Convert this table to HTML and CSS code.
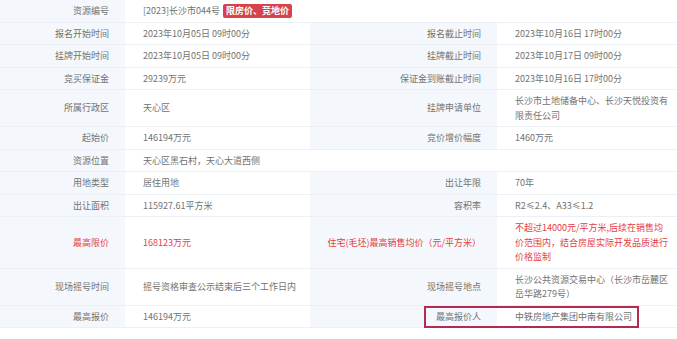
FILE: index.html
```html
<!DOCTYPE html>
<html lang="zh">
<head>
<meta charset="utf-8">
<title>资源信息</title>
<link rel="stylesheet" href="styles.css">
</head>
<body>
<div class="info">
  <div class="lbl">资源编号</div>
  <div class="val span3">[2023]长沙市044号<span class="tag">限房价、竞地价</span></div>

  <div class="lbl">报名开始时间</div>
  <div class="val">2023年10月05日 09时00分</div>
  <div class="lbl">报名截止时间</div>
  <div class="val">2023年10月16日 17时00分</div>

  <div class="lbl">挂牌开始时间</div>
  <div class="val">2023年10月05日 09时00分</div>
  <div class="lbl">挂牌截止时间</div>
  <div class="val">2023年10月17日 09时00分</div>

  <div class="lbl">竞买保证金</div>
  <div class="val">29239万元</div>
  <div class="lbl">保证金到账截止时间</div>
  <div class="val">2023年10月16日 17时00分</div>

  <div class="lbl">所属行政区</div>
  <div class="val">天心区</div>
  <div class="lbl">挂牌申请单位</div>
  <div class="val">长沙市土地储备中心、长沙天悦投资有<br>限责任公司</div>

  <div class="lbl">起始价</div>
  <div class="val">146194万元</div>
  <div class="lbl">竞价增价幅度</div>
  <div class="val">1460万元</div>

  <div class="lbl">资源位置</div>
  <div class="val span3">天心区黑石村，天心大道西侧</div>

  <div class="lbl">用地类型</div>
  <div class="val">居住用地</div>
  <div class="lbl">出让年限</div>
  <div class="val">70年</div>

  <div class="lbl">出让面积</div>
  <div class="val">115927.61平方米</div>
  <div class="lbl">容积率</div>
  <div class="val">R2≤2.4、A33≤1.2</div>

  <div class="lbl red">最高限价</div>
  <div class="val red">168123万元</div>
  <div class="lbl red">住宅(毛坯)最高销售均价（元/平方米）</div>
  <div class="val red">不超过14000元/平方米,后续在销售均<br>价范围内，结合房屋实际开发品质进行<br>价格监制</div>

  <div class="lbl">现场摇号时间</div>
  <div class="val">摇号资格审查公示结束后三个工作日内</div>
  <div class="lbl">现场摇号地点</div>
  <div class="val">长沙公共资源交易中心（长沙市岳麓区<br>岳华路279号）</div>

  <div class="lbl">最高报价</div>
  <div class="val">146194万元</div>
  <div class="lbl mark">最高报价人</div>
  <div class="val">中铁房地产集团中南有限公司</div>
</div>
</body>
</html>
```
FILE: styles.css
```css
html, body {
  margin: 0;
  padding: 0;
  background: #ffffff;
}

body {
  font-family: "Noto Sans CJK SC", "Noto Sans", "Liberation Sans", sans-serif;
  font-size: 9px;
  color: #727272;
}

.info {
  display: grid;
  grid-template-columns: 125px 185px 187px 1fr;
  width: 677px;
}

.lbl,
.val {
  display: flex;
  align-items: center;
  line-height: 14.5px;
  padding-top: 4px;
  padding-bottom: 3px;
  border-bottom: 1px solid #eceff4;
  white-space: nowrap;
}

.lbl {
  justify-content: flex-end;
  text-align: right;
  padding-right: 16px;
  background: #f4f8fc;
  color: #727272;
}

.val {
  padding-left: 18px;
  padding-right: 4px;
  color: #727272;
}

.span3 {
  grid-column: span 3;
}

.red {
  color: #e33d44;
}

.tag {
  display: inline-block;
  margin-left: 3px;
  padding: 0 3px;
  height: 14px;
  line-height: 14px;
  background: #d6434b;
  color: #ffffff;
  font-weight: bold;
  border-radius: 2px;
}

.mark {
  position: relative;
}

.mark::after {
  content: "";
  position: absolute;
  left: 114px;
  top: 0;
  width: 211px;
  height: 18px;
  border: 2px solid #b52a50;
  z-index: 2;
}
```
